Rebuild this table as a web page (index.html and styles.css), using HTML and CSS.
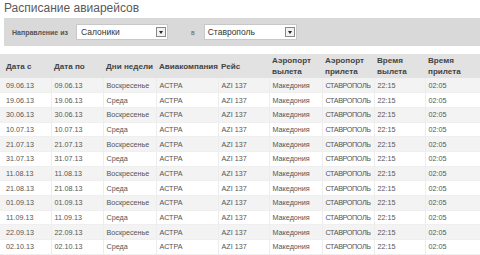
FILE: index.html
```html
<!DOCTYPE html>
<html>
<head>
<meta charset="utf-8">
<link rel="stylesheet" href="styles.css">
</head>
<body>
<h1 class="title">Расписание авиарейсов</h1>
<div class="filter">
  <span class="label">Направление из</span>
  <div class="select sel-from"><span class="val">Салоники</span><span class="btn"><i></i></span></div>
  <span class="in">в</span>
  <div class="select sel-to"><span class="val">Ставрополь</span><span class="btn"><i></i></span></div>
</div>
<table class="sched">
  <colgroup>
    <col style="width:51px"><col style="width:52px"><col style="width:53px"><col style="width:62px"><col style="width:51px"><col style="width:53px"><col style="width:52px"><col style="width:51px"><col style="width:55px">
  </colgroup>
  <thead>
    <tr><th>Дата с</th><th>Дата по</th><th>Дни недели</th><th>Авиакомпания</th><th>Рейс</th><th>Аэропорт<br>вылета</th><th>Аэропорт<br>прилета</th><th>Время<br>вылета</th><th>Время<br>прилета</th></tr>
  </thead>
  <tbody>
    <tr><td>09.06.13</td><td>09.06.13</td><td>Воскресенье</td><td>АСТРА</td><td>AZI 137</td><td>Македония</td><td>СТАВРОПОЛЬ</td><td>22:15</td><td>02:05</td></tr>
    <tr><td>19.06.13</td><td>19.06.13</td><td>Среда</td><td>АСТРА</td><td>AZI 137</td><td>Македония</td><td>СТАВРОПОЛЬ</td><td>22:15</td><td>02:05</td></tr>
    <tr><td>30.06.13</td><td>30.06.13</td><td>Воскресенье</td><td>АСТРА</td><td>AZI 137</td><td>Македония</td><td>СТАВРОПОЛЬ</td><td>22:15</td><td>02:05</td></tr>
    <tr><td>10.07.13</td><td>10.07.13</td><td>Среда</td><td>АСТРА</td><td>AZI 137</td><td>Македония</td><td>СТАВРОПОЛЬ</td><td>22:15</td><td>02:05</td></tr>
    <tr><td>21.07.13</td><td>21.07.13</td><td>Воскресенье</td><td>АСТРА</td><td>AZI 137</td><td>Македония</td><td>СТАВРОПОЛЬ</td><td>22:15</td><td>02:05</td></tr>
    <tr><td>31.07.13</td><td>31.07.13</td><td>Среда</td><td>АСТРА</td><td>AZI 137</td><td>Македония</td><td>СТАВРОПОЛЬ</td><td>22:15</td><td>02:05</td></tr>
    <tr><td>11.08.13</td><td>11.08.13</td><td>Воскресенье</td><td>АСТРА</td><td>AZI 137</td><td>Македония</td><td>СТАВРОПОЛЬ</td><td>22:15</td><td>02:05</td></tr>
    <tr><td>21.08.13</td><td>21.08.13</td><td>Среда</td><td>АСТРА</td><td>AZI 137</td><td>Македония</td><td>СТАВРОПОЛЬ</td><td>22:15</td><td>02:05</td></tr>
    <tr><td>01.09.13</td><td>01.09.13</td><td>Воскресенье</td><td>АСТРА</td><td>AZI 137</td><td>Македония</td><td>СТАВРОПОЛЬ</td><td>22:15</td><td>02:05</td></tr>
    <tr><td>11.09.13</td><td>11.09.13</td><td>Среда</td><td>АСТРА</td><td>AZI 137</td><td>Македония</td><td>СТАВРОПОЛЬ</td><td>22:15</td><td>02:05</td></tr>
    <tr><td>22.09.13</td><td>22.09.13</td><td>Воскресенье</td><td>АСТРА</td><td>AZI 137</td><td>Македония</td><td>СТАВРОПОЛЬ</td><td>22:15</td><td>02:05</td></tr>
    <tr><td>02.10.13</td><td>02.10.13</td><td>Среда</td><td>АСТРА</td><td>AZI 137</td><td>Македония</td><td>СТАВРОПОЛЬ</td><td>22:15</td><td>02:05</td></tr>
  </tbody>
</table>
</body>
</html>
```
FILE: styles.css
```css
html, body {
  margin: 0;
  padding: 0;
  background: #fff;
  font-family: "Liberation Sans", Arial, sans-serif;
  overflow: hidden;
}
.title {
  margin: 0;
  padding: 1px 0 0 4px;
  height: 17px;
  font-size: 12px;
  font-weight: normal;
  line-height: 14px;
  color: #5a5a5a;
}
.filter {
  margin-left: 4px;
  height: 28px;
  background: #d9d9d9;
  display: flex;
  align-items: center;
  font-size: 7px;
  color: #555;
}
.label {
  font-weight: bold;
  margin-left: 8px;
  width: 64px;
}
.select {
  box-sizing: border-box;
  height: 16px;
  background: #fff;
  border: 1px solid #c8c8c8;
  display: flex;
  align-items: center;
  justify-content: space-between;
  padding: 0 1px 0 4px;
}
.sel-from { width: 92px; }
.sel-to { width: 93px; padding-left: 3px; }
.val {
  font-size: 8.5px;
  color: #333;
}
.in {
  margin: 0 9px 0 23px;
  font-size: 7px;
  color: #666;
}
.btn {
  box-sizing: border-box;
  width: 10px;
  height: 10px;
  border: 1px solid #888;
  background: #f2f2f2;
  display: flex;
  align-items: center;
  justify-content: center;
}
.btn i {
  width: 0;
  height: 0;
  border-left: 2.5px solid transparent;
  border-right: 2.5px solid transparent;
  border-top: 3px solid #222;
}
.sched {
  margin-top: 8px;
  width: 480px;
  border-collapse: collapse;
  table-layout: fixed;
}
.sched th {
  background: #e2e2e2;
  height: 24px;
  font-size: 8.1px;
  line-height: 11px;
  font-weight: bold;
  color: #444;
  text-align: left;
  padding: 0 0 0 3px;
  vertical-align: middle;
  white-space: nowrap;
  overflow: hidden;
}
.sched td {
  height: 14.7px;
  padding: 0 0 0 3px;
  font-size: 7.2px;
  color: #555;
  border-left: 1px solid #ededed;
  border-bottom: 1px solid #efefef;
  white-space: nowrap;
  box-sizing: border-box;
}
.sched td:nth-child(7) {
  letter-spacing: -0.4px;
}
.sched th:first-child, .sched td:first-child {
  padding-left: 6px;
  border-left: none;
}
.sched tbody tr:nth-child(odd) td {
  background: #f3f3f3;
}
.sched tbody tr:nth-child(even) td {
  background: #fff;
}
```
